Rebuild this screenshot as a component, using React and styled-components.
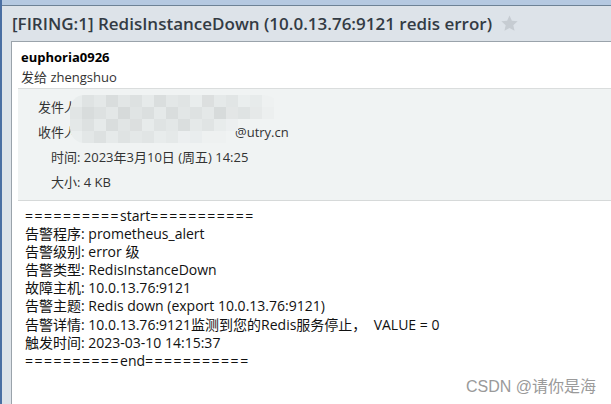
import React from "react";
import styled, { createGlobalStyle } from "styled-components";

const GlobalStyle = createGlobalStyle`
  html, body {
    margin: 0;
    padding: 0;
    background: #dde3e9;
    overflow: hidden;
  }
`;

const T = "transparent";
const mosaic = [
  "#e8ecec", "#dfe3e3", "#e4e8e8", "#d9dddd", "#e2e6e6", "#dde1e1", "#e6eaea", "#dadede", "#e3e7e7", "#e0e4e4", "#e9eded", "#dcdfdf", "#e5e9e9", "#e1e5e5", "#eaeeee", "#e7ebeb", "#eef1f1", T,
  "#e1e5e5", "#d8dcdc", "#dde1e1", "#e3e7e7", "#d6dada", "#e0e4e4", "#dbdfdf", "#e5e9e9", "#d9dddd", "#e2e6e6", "#dee2e2", "#e4e8e8", "#d7dbdb", "#e3e6e6", "#dfe3e3", "#e6e9e9", "#ecefef", T,
  "#e4e8e8", "#dde1e1", "#e6eaea", "#d9dddd", "#e1e5e5", "#dcdfdf", "#e7ebeb", "#dfe3e3", "#e3e7e7", "#dadede", "#e5e9e9", "#e0e4e4", "#e8ecec", "#eceff0", T, T, T, T,
  "#eaeeee", "#e3e7e7", "#dde1e1", "#e6eaea", "#dfe3e3", "#e4e8e8", "#e1e5e5", "#e8ecec", "#e5e9e9", "#eceff0", "#e9edee", "#eef1f1", "#eef1f1", T, T, T, T, T,
];

const bodyLines = [
  ["==========", "start", "==========="],
  "告警程序: prometheus_alert",
  "告警级别: error 级",
  "告警类型: RedisInstanceDown",
  "故障主机: 10.0.13.76:9121",
  "告警主题: Redis down (export 10.0.13.76:9121)",
  "告警详情: 10.0.13.76:9121监测到您的Redis服务停止，  VALUE = 0",
  "触发时间: 2023-03-10 14:15:37",
  ["==========", "end", "==========="],
];

const App = () => {
  return (
    <>
      <GlobalStyle />
      <Frame>
        <TopStrip />
        <TitleRow>
          <Title>[FIRING:1] RedisInstanceDown (10.0.13.76:9121 redis error)</Title>
          <Star viewBox="0 0 24 24">
            <path d="M12 1.8l3 6.7 7.3.7-5.5 4.9 1.6 7.2L12 17.6l-6.4 3.7 1.6-7.2-5.5-4.9 7.3-.7z" />
          </Star>
        </TitleRow>
        <Card>
          <Sender>
            <SenderName>euphoria0926</SenderName>
            <SentTo>发给 zhengshuo</SentTo>
          </Sender>
          <HeaderBox>
            <MetaRow>发件人</MetaRow>
            <MetaRow>
              收件人<Hidden />@utry.cn
            </MetaRow>
            <MetaRow $indent>时间: 2023年3月10日 (周五) 14:25</MetaRow>
            <MetaRow $indent>大小: 4 KB</MetaRow>
            <Mosaic>
              {mosaic.map((c, i) => (
                <Cell key={i} style={{ background: c }} />
              ))}
            </Mosaic>
          </HeaderBox>
          <Body>
            {bodyLines.map((l, i) =>
              Array.isArray(l) ? (
                <Line key={i}>
                  <Rule>{l[0]}</Rule>
                  {l[1]}
                  <Rule>{l[2]}</Rule>
                </Line>
              ) : (
                <Line key={i}>{l}</Line>
              )
            )}
          </Body>
        </Card>
        <Watermark>CSDN @请你是海</Watermark>
      </Frame>
    </>
  );
};

const Frame = styled.div`
  position: relative;
  width: 609px;
  height: 404px;
  border-left: 2px solid #4a6fa3;
  display: flex;
  flex-direction: column;
  background: #dde3e9;
  font-family: "Open Sans", "Noto Sans CJK SC", sans-serif;
`;

const TopStrip = styled.div`
  height: 5px;
  background: #b5c9e1;
  border-bottom: 1px solid #6d8296;
`;

const TitleRow = styled.div`
  height: 35px;
  display: flex;
  align-items: center;
  padding-left: 10px;
  gap: 8px;
`;

const Title = styled.div`
  font-size: 17px;
  font-weight: 600;
  color: #333b44;
  white-space: nowrap;
`;

const Star = styled.svg`
  width: 19px;
  height: 19px;
  fill: #c6ccd2;
  margin-top: -1px;
`;

const Card = styled.div`
  flex: 1;
  margin-left: 9px;
  background: #fff;
  border-top: 1px solid #9aa3ab;
  border-left: 1px solid #9aa3ab;
  display: flex;
  flex-direction: column;
  overflow: hidden;
`;

const Sender = styled.div`
  padding: 6px 0 0 9px;
  height: 40px;
`;

const SenderName = styled.div`
  font-size: 13px;
  font-weight: 700;
  color: #000;
  line-height: 18px;
`;

const SentTo = styled.div`
  font-size: 13px;
  color: #333;
  line-height: 20px;
  margin-top: 1px;
`;

const HeaderBox = styled.div`
  position: relative;
  margin-left: 6px;
  background: #f0f3f3;
  border-top: 1px solid #dadddd;
  border-bottom: 1px solid #d6d9d9;
  padding: 6px 0 5px 20px;
  height: 100px;
`;

const MetaRow = styled.div`
  font-size: 13px;
  color: #333;
  line-height: 25px;
  padding-left: ${(p) => (p.$indent ? "13px" : "0")};
  white-space: nowrap;
`;

const Hidden = styled.span`
  display: inline-block;
  width: 158px;
`;

const Mosaic = styled.div`
  position: absolute;
  left: 52px;
  top: 6px;
  width: 216px;
  height: 48px;
  display: grid;
  grid-template-columns: repeat(18, 12px);
  grid-template-rows: repeat(4, 12px);
  border-radius: 24px 40px 40px 24px;
  overflow: hidden;
  filter: blur(0.6px);
`;

const Cell = styled.div``;

const Body = styled.div`
  padding: 6px 0 0 13px;
`;

const Line = styled.div`
  font-size: 14px;
  line-height: 18.1px;
  color: #111;
  white-space: pre;
`;

const Rule = styled.span`
  letter-spacing: 1.5px;
`;

const Watermark = styled.div`
  position: absolute;
  right: 15px;
  bottom: 7px;
  font-size: 16px;
  color: #9a9a9a;
  text-shadow: 0 0 1px #fff;
  font-family: "Liberation Sans", "Noto Sans CJK SC", sans-serif;
`;

export default App;
